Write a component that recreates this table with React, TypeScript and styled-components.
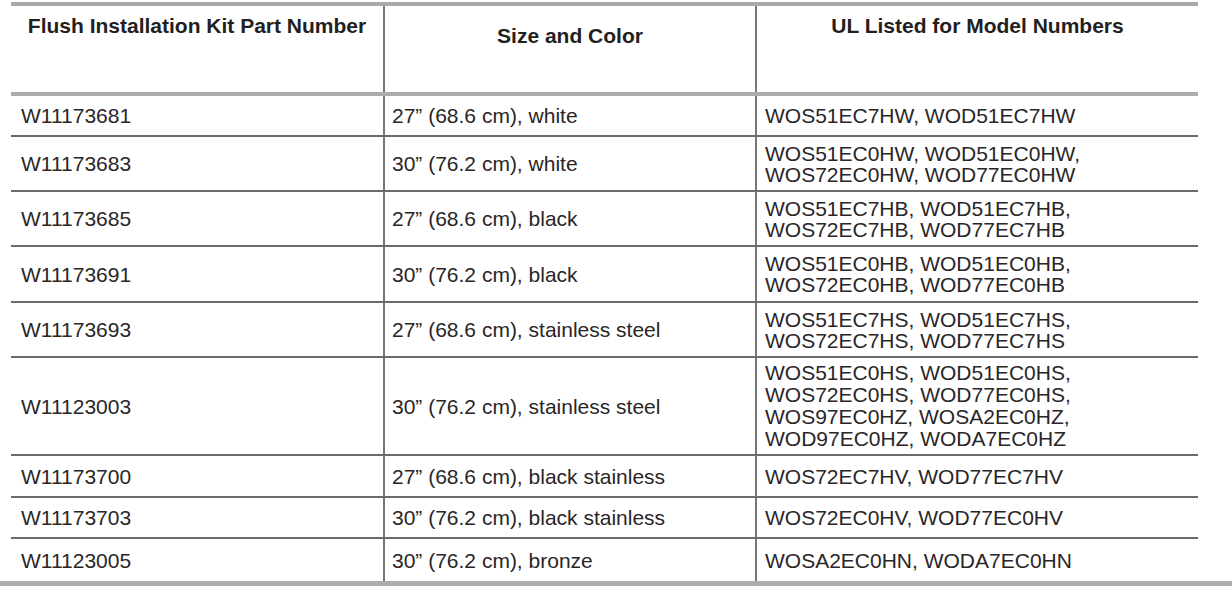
import React from 'react';
import styled, { createGlobalStyle } from 'styled-components';

const GlobalStyle = createGlobalStyle`
  html, body {
    margin: 0;
    padding: 0;
    background: #ffffff;
  }
  body {
    font-family: "Liberation Sans", Arial, Helvetica, sans-serif;
    color: #231f20;
  }
`;

const Page = styled.div`
  width: 1232px;
  padding-top: 2px;
`;

const Table = styled.div`
  margin-left: 11px;
  width: 1187px;
  border-top: 4px solid #a9a9a9;
`;

const Row = styled.div<{ $h: number; $head?: boolean; $last?: boolean }>`
  display: grid;
  grid-template-columns: 372px 372px 443px;
  box-sizing: border-box;
  height: ${(p) => p.$h}px;
  border-bottom: ${(p) =>
    p.$last ? 'none' : p.$head ? '4px solid #acacac' : '2px solid #6b6b6b'};
`;

const HeadCell = styled.div<{ $top: number; $divider?: boolean }>`
  box-sizing: border-box;
  padding-top: ${(p) => p.$top}px;
  text-align: center;
  font-size: 21px;
  line-height: 24px;
  font-weight: 700;
  border-left: ${(p) => (p.$divider ? '2px solid #777777' : 'none')};
`;

const Cell = styled.div<{ $pad: number; $divider?: boolean }>`
  box-sizing: border-box;
  display: flex;
  flex-direction: column;
  justify-content: center;
  padding-left: ${(p) => p.$pad}px;
  font-size: 21px;
  line-height: 21px;
  color: #2a2627;
  border-left: ${(p) => (p.$divider ? '2px solid #777777' : 'none')};
`;

const ModelLine = styled.span<{ $tall?: boolean }>`
  display: block;
  line-height: ${(p) => (p.$tall ? 22 : 21)}px;
`;

const BottomRule = styled.div`
  height: 5px;
  background: #adadad;
`;

type Kit = { part: string; size: string; models: string[]; h: number };

const kits: Kit[] = [
  { part: 'W11173681', size: '27” (68.6 cm), white', models: ['WOS51EC7HW, WOD51EC7HW'], h: 41 },
  {
    part: 'W11173683',
    size: '30” (76.2 cm), white',
    models: ['WOS51EC0HW, WOD51EC0HW,', 'WOS72EC0HW, WOD77EC0HW'],
    h: 55,
  },
  {
    part: 'W11173685',
    size: '27” (68.6 cm), black',
    models: ['WOS51EC7HB, WOD51EC7HB,', 'WOS72EC7HB, WOD77EC7HB'],
    h: 55,
  },
  {
    part: 'W11173691',
    size: '30” (76.2 cm), black',
    models: ['WOS51EC0HB, WOD51EC0HB,', 'WOS72EC0HB, WOD77EC0HB'],
    h: 56,
  },
  {
    part: 'W11173693',
    size: '27” (68.6 cm), stainless steel',
    models: ['WOS51EC7HS, WOD51EC7HS,', 'WOS72EC7HS, WOD77EC7HS'],
    h: 55,
  },
  {
    part: 'W11123003',
    size: '30” (76.2 cm), stainless steel',
    models: [
      'WOS51EC0HS, WOD51EC0HS,',
      'WOS72EC0HS, WOD77EC0HS,',
      'WOS97EC0HZ, WOSA2EC0HZ,',
      'WOD97EC0HZ, WODA7EC0HZ',
    ],
    h: 98,
  },
  { part: 'W11173700', size: '27” (68.6 cm), black stainless', models: ['WOS72EC7HV, WOD77EC7HV'], h: 42 },
  { part: 'W11173703', size: '30” (76.2 cm), black stainless', models: ['WOS72EC0HV, WOD77EC0HV'], h: 41 },
  { part: 'W11123005', size: '30” (76.2 cm), bronze', models: ['WOSA2EC0HN, WODA7EC0HN'], h: 42 },
];

export default function App() {
  return (
    <Page>
      <GlobalStyle />
      <Table>
        <Row $h={90} $head>
          <HeadCell $top={8}>Flush Installation Kit Part Number</HeadCell>
          <HeadCell $top={18} $divider>
            Size and Color
          </HeadCell>
          <HeadCell $top={8} $divider>
            UL Listed for Model Numbers
          </HeadCell>
        </Row>
        {kits.map((k, i) => (
          <Row key={k.part} $h={k.h} $last={i === kits.length - 1}>
            <Cell $pad={10}>{k.part}</Cell>
            <Cell $pad={7} $divider>
              {k.size}
            </Cell>
            <Cell $pad={8} $divider>
              {k.models.map((m) => (
                <ModelLine key={m} $tall={k.models.length > 2}>
                  {m}
                </ModelLine>
              ))}
            </Cell>
          </Row>
        ))}
      </Table>
      <BottomRule />
    </Page>
  );
}
